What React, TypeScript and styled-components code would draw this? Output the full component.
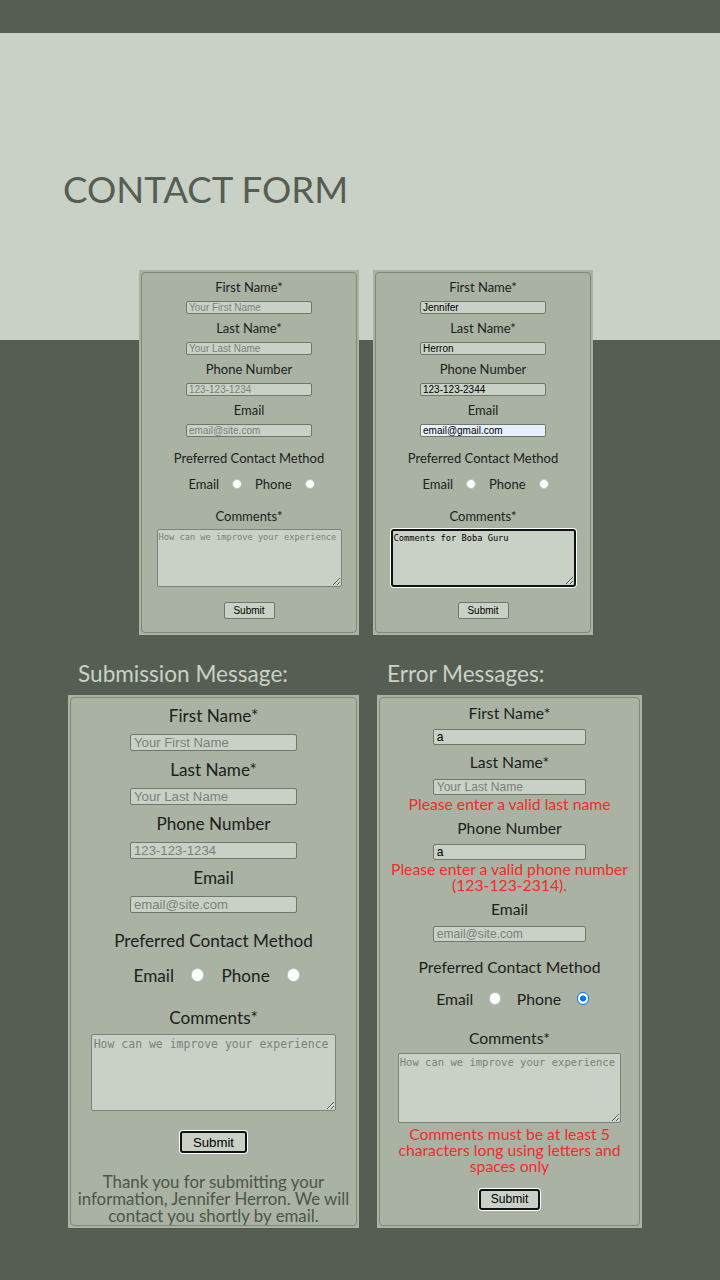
import React from 'react';
import styled, { createGlobalStyle, css } from 'styled-components';

const DARK = '#565e54';
const LIGHT = '#c9d1c6';
const FORM_BG = '#a9b2a3';

// every size inside a form is scaled by the --s variable of its frame
const u = (n: number) => `calc(var(--s) * ${n}px)`;

const GlobalStyle = createGlobalStyle`
  body {
    margin: 0;
    background: ${DARK};
    font-family: Lato, "Open Sans", sans-serif;
  }
`;

const Page = styled.div`
  width: 720px;
  min-height: 1280px;
  background: ${DARK};
`;

const TopBar = styled.div`
  height: 33px;
`;

const Hero = styled.section`
  padding-top: 134px;
  background: linear-gradient(to bottom, ${LIGHT} 0, ${LIGHT} 307px, ${DARK} 307px);
`;

const Title = styled.h1`
  margin: 0 0 58px 63px;
  font-size: 36.6px;
  line-height: 45px;
  font-weight: 400;
  color: ${DARK};
`;

const TopRow = styled.div`
  display: flex;
  gap: 14px;
  padding-left: 139px;
`;

const BottomGrid = styled.div`
  display: grid;
  grid-template-columns: 291px 265px;
  column-gap: 18px;
  padding: 26px 0 0 68px;
`;

const Column = styled.div`
  display: flex;
  flex-direction: column;
`;

const SectionHeading = styled.h2`
  margin: 0 0 8px 10px;
  font-size: 22.6px;
  line-height: 26px;
  font-weight: 400;
  color: ${LIGHT};
`;

const Frame = styled.div<{ $s: number; $w?: number; $h?: number }>`
  --s: ${p => p.$s};
  box-sizing: border-box;
  ${p => p.$w && css`width: ${p.$w}px; flex: none;`}
  ${p => p.$h && css`height: ${p.$h}px;`}
  padding: 2px;
  background: ${FORM_BG};
`;

const FormBox = styled.form<{ $pt?: number }>`
  box-sizing: border-box;
  height: 100%;
  display: flex;
  flex-direction: column;
  align-items: center;
  padding-top: ${p => u(p.$pt ?? 6)};
  padding-bottom: ${u(13)};
  border: 1px solid #7f8879;
  border-radius: 4px;
  color: #1d211c;
  & > * {
    flex-shrink: 0;
  }
`;

const Field = styled.div<{ $err?: boolean }>`
  display: flex;
  flex-direction: column;
  align-items: center;
  margin-bottom: ${p => u(p.$err ? 5.2 : 6)};
`;

const Label = styled.label<{ $gap?: number }>`
  display: block;
  font-size: ${u(13)};
  line-height: ${u(16)};
  margin-bottom: ${p => u(p.$gap ?? 6)};
`;

const MethodLabel = styled.div`
  font-size: ${u(13)};
  line-height: ${u(16)};
  margin: ${u(7)} 0 ${u(10)};
`;

const TextInput = styled.input<{ $autofill?: boolean }>`
  box-sizing: border-box;
  width: ${u(126)};
  height: ${u(13)};
  margin: 0;
  padding: 0 ${u(2)};
  font-family: "Liberation Sans", Arial, sans-serif;
  font-size: ${u(10)};
  color: #000;
  background: ${p => (p.$autofill ? '#e8f0fe' : LIGHT)};
  border: 1px solid #6f776c;
  border-radius: 2px;
  outline: none;
  &::placeholder {
    color: #7b807a;
  }
`;

const ErrorText = styled.div`
  margin-top: 1px;
  color: #f22b2b;
  font-size: ${u(13)};
  line-height: ${u(13.2)};
  text-align: center;
`;

const RadioRow = styled.div`
  display: flex;
  align-items: center;
  gap: ${u(13)};
  height: ${u(16)};
  margin-bottom: ${u(16)};
  padding-left: ${u(5)};
  font-size: ${u(13)};
`;

const Radio = styled.input.attrs({ type: 'radio' })`
  appearance: none;
  box-sizing: border-box;
  width: ${u(10)};
  height: ${u(10)};
  margin: 0;
  border-radius: 50%;
  background: #fff;
  border: 1px solid #b9c0b5;
  &:checked {
    border: ${u(1.6)} solid #0075ff;
    background: radial-gradient(circle, #0075ff 0 38%, #fff 44%);
  }
`;

const focusRing = css`
  border: 2px solid #111;
  border-radius: 3px;
  box-shadow: 0 0 0 1px #fff;
`;

const Comments = styled.textarea<{ $focus?: boolean }>`
  box-sizing: border-box;
  width: ${u(185)};
  height: ${u(58)};
  margin: 0;
  padding: ${u(2)} ${u(1)};
  font-family: "DejaVu Sans Mono", "Liberation Mono", monospace;
  font-size: ${u(8.7)};
  line-height: 1.2;
  color: #000;
  background: ${LIGHT};
  border: 1px solid #7b8378;
  border-radius: 2px;
  outline: none;
  ${p => p.$focus && focusRing}
  &::placeholder {
    color: #7b807a;
  }
`;

const CommentsError = styled(ErrorText)`
  margin: 3px 0 -3px;
`;

const SubmitButton = styled.button<{ $focus?: boolean }>`
  box-sizing: border-box;
  width: ${u(51)};
  height: ${u(17)};
  margin-top: ${u(15)};
  padding: 0;
  font-family: "Liberation Sans", Arial, sans-serif;
  font-size: ${u(10)};
  color: #000;
  background: ${LIGHT};
  border: 1px solid #6f776c;
  border-radius: 2px;
  ${p => p.$focus && focusRing}
`;

const ThankYou = styled.p`
  margin: 20px 0 0;
  font-size: ${u(12.75)};
  line-height: ${u(12.9)};
  white-space: nowrap;
  text-align: center;
  color: #4d554a;
`;

interface FieldSpec {
  label: string;
  placeholder: string;
  value?: string;
  autofill?: boolean;
  error?: React.ReactNode;
}

interface FormSpec {
  fields: FieldSpec[];
  phoneChecked?: boolean;
  comment?: string;
  commentFocus?: boolean;
  commentError?: React.ReactNode;
  submitFocus?: boolean;
  pt?: number;
  footer?: React.ReactNode;
}

const placeholders = ['Your First Name', 'Your Last Name', '123-123-1234', 'email@site.com'];
const labels = ['First Name*', 'Last Name*', 'Phone Number', 'Email'];

const makeFields = (values: (string | undefined)[] = [], errors: React.ReactNode[] = []): FieldSpec[] =>
  labels.map((label, i) => ({
    label,
    placeholder: placeholders[i],
    value: values[i],
    error: errors[i],
  }));

const ContactForm: React.FC<FormSpec> = ({
  fields, phoneChecked, comment, commentFocus, commentError, submitFocus, pt, footer,
}) => (
  <FormBox $pt={pt} onSubmit={e => e.preventDefault()}>
    {fields.map(f => (
      <Field key={f.label} $err={!!f.error}>
        <Label>{f.label}</Label>
        <TextInput placeholder={f.placeholder} defaultValue={f.value} $autofill={f.autofill} />
        {f.error && <ErrorText>{f.error}</ErrorText>}
      </Field>
    ))}
    <MethodLabel>Preferred Contact Method</MethodLabel>
    <RadioRow>
      <span>Email</span>
      <Radio name="method" />
      <span>Phone</span>
      <Radio name="method" defaultChecked={phoneChecked} />
    </RadioRow>
    <Label $gap={5}>Comments*</Label>
    <Comments
      placeholder="How can we improve your experience"
      defaultValue={comment}
      $focus={commentFocus}
    />
    {commentError && <CommentsError>{commentError}</CommentsError>}
    <SubmitButton type="submit" $focus={submitFocus}>Submit</SubmitButton>
    {footer}
  </FormBox>
);

const filledFields = makeFields(['Jennifer', 'Herron', '123-123-2344', 'email@gmail.com']);
filledFields[3].autofill = true;

export default function App() {
  return (
    <Page>
      <GlobalStyle />
      <TopBar />
      <Hero>
        <Title>CONTACT FORM</Title>
        <TopRow>
          <Frame $s={1} $w={220}>
            <ContactForm fields={makeFields()} />
          </Frame>
          <Frame $s={1} $w={220}>
            <ContactForm fields={filledFields} comment="Comments for Boba Guru" commentFocus />
          </Frame>
        </TopRow>
      </Hero>
      <BottomGrid>
        <Column>
          <SectionHeading>Submission Message:</SectionHeading>
          <Frame $s={1.32} $h={533}>
            <ContactForm
              pt={5}
              fields={makeFields()}
              submitFocus
              footer={
                <ThankYou>
                  Thank you for submitting your<br />
                  information, Jennifer Herron. We will<br />
                  contact you shortly by email.
                </ThankYou>
              }
            />
          </Frame>
        </Column>
        <Column>
          <SectionHeading>Error Messages:</SectionHeading>
          <Frame $s={1.21} $h={533}>
            <ContactForm
              pt={3.8}
              fields={makeFields(
                ['a', undefined, 'a', undefined],
                [undefined, 'Please enter a valid last name', <>Please enter a valid phone number<br />(123-123-2314).</>, undefined],
              )}
              phoneChecked
              submitFocus
              commentError={<>Comments must be at least 5<br />characters long using letters and<br />spaces only</>}
            />
          </Frame>
        </Column>
      </BottomGrid>
    </Page>
  );
}
